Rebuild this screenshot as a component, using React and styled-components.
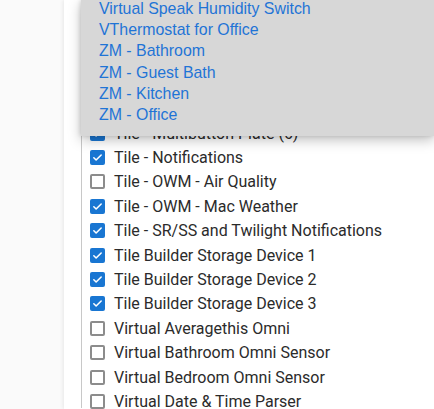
import React from 'react'
import styled, { createGlobalStyle } from 'styled-components'

const GlobalStyle = createGlobalStyle`
  html, body {
    margin: 0;
    padding: 0;
    background: #fafafa;
  }
`

const Page = styled.div`
  display: flex;
  height: 409px;
  overflow: hidden;
  position: relative;
`

const Gutter = styled.div`
  width: 64px;
  flex-shrink: 0;
  background: #fafafa;
`

const Card = styled.div`
  flex: 1;
  background: #fff;
  box-shadow: -1px 0 4px rgba(0, 0, 0, 0.08);
  padding-left: 17px;
  position: relative;
`

const List = styled.div`
  border-left: 1px solid #c8c8c8;
  height: 100%;
  padding-left: 8px;
  margin-top: -1px;
  display: flex;
  flex-direction: column;
`

const Row = styled.label`
  display: flex;
  align-items: center;
  gap: 9px;
  height: 24.4px;
  flex-shrink: 0;
  font-family: Roboto, "Liberation Sans", sans-serif;
  font-size: 16px;
  color: #2b2b2b;
  white-space: nowrap;
`

const Box = styled.span`
  width: 15px;
  height: 15px;
  box-sizing: border-box;
  border-radius: 2px;
  flex-shrink: 0;
  display: flex;
  align-items: center;
  justify-content: center;
  background: ${({ checked }) => (checked ? '#1976d2' : '#fff')};
  border: ${({ checked }) => (checked ? 'none' : '2px solid #8c8c8c')};
`

const Dropdown = styled.div`
  position: absolute;
  top: 0;
  left: 81px;
  right: 0;
  height: 136px;
  background: #d7d7d7;
  box-shadow: 0 4px 12px rgba(0, 0, 0, 0.25), -1px 0 4px rgba(0, 0, 0, 0.12);
  padding-left: 18px;
  box-sizing: border-box;
  overflow: hidden;
`

const Options = styled.div`
  margin-top: -2px;
  display: flex;
  flex-direction: column;
`

const Option = styled.div`
  height: 21.2px;
  line-height: 21.2px;
  font-family: "Liberation Sans", Arial, sans-serif;
  font-size: 15.9px;
  color: #1f74d6;
  white-space: nowrap;
`

const Check = () => (
  <svg width="11" height="11" viewBox="0 0 24 24">
    <path d="M4 12.5l5 5L20 6.5" fill="none" stroke="#fff" strokeWidth="3.4" strokeLinecap="round" strokeLinejoin="round" />
  </svg>
)

const devices = [
  ['Tile - Lock Status', true],
  ['Tile - Mode', true],
  ['Tile - Motion', false],
  ['Tile - Multibutton Plate (4)', true],
  ['Tile - Multibutton Plate (5)', true],
  ['Tile - Multibutton Plate (6)', true],
  ['Tile - Notifications', true],
  ['Tile - OWM - Air Quality', false],
  ['Tile - OWM - Mac Weather', true],
  ['Tile - SR/SS and Twilight Notifications', true],
  ['Tile Builder Storage Device 1', true],
  ['Tile Builder Storage Device 2', true],
  ['Tile Builder Storage Device 3', true],
  ['Virtual Averagethis Omni', false],
  ['Virtual Bathroom Omni Sensor', false],
  ['Virtual Bedroom Omni Sensor', false],
  ['Virtual Date & Time Parser', false],
]

const options = [
  'Virtual Speak Humidity Switch',
  'VThermostat for Office',
  'ZM - Bathroom',
  'ZM - Guest Bath',
  'ZM - Kitchen',
  'ZM - Office',
]

export default function App() {
  return (
    <>
      <GlobalStyle />
      <Page>
        <Gutter />
        <Card>
          <List>
            {devices.map(([name, checked]) => (
              <Row key={name}>
                <Box checked={checked}>{checked && <Check />}</Box>
                {name}
              </Row>
            ))}
          </List>
        </Card>
        <Dropdown>
          <Options>
            {options.map((o) => (
              <Option key={o}>{o}</Option>
            ))}
          </Options>
        </Dropdown>
      </Page>
    </>
  )
}
